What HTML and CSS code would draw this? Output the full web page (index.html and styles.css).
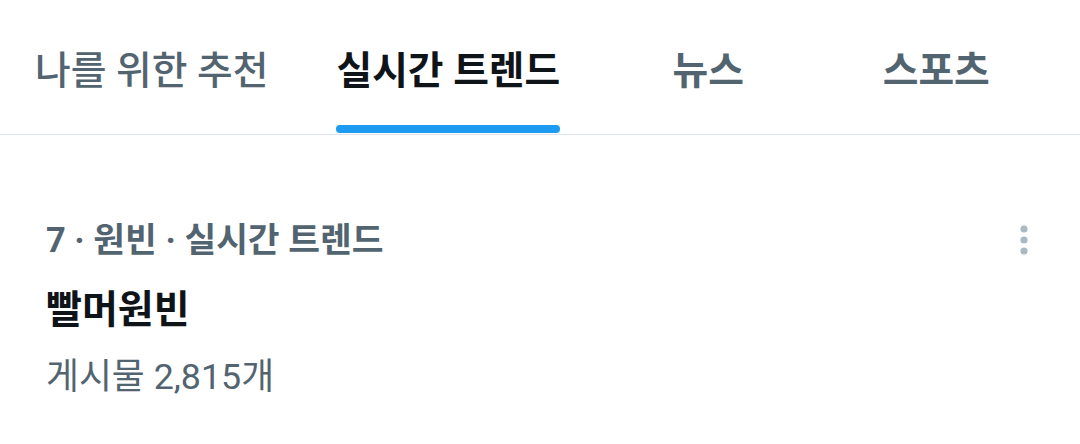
FILE: index.html
```html
<!DOCTYPE html>
<html lang="ko">
<head>
<meta charset="utf-8">
<link rel="stylesheet" href="styles.css">
</head>
<body>
<nav class="tabs">
  <div class="tab tab-first"><span class="tab-label">나를 위한 추천</span><span class="tab-bar"></span></div>
  <div class="tab tab-active"><span class="tab-label">실시간 트렌드</span><span class="tab-bar"></span></div>
  <div class="tab tab-wide"><span class="tab-label">뉴스</span><span class="tab-bar"></span></div>
  <div class="tab tab-wide"><span class="tab-label">스포츠</span><span class="tab-bar"></span></div>
</nav>
<section class="trend">
  <div class="trend-text">
    <div class="trend-meta">7 · 원빈 · 실시간 트렌드</div>
    <div class="trend-title">빨머원빈</div>
    <div class="trend-count">게시물 2,815개</div>
  </div>
  <div class="more">
    <svg width="12" height="34" viewBox="0 0 12 34"><circle cx="6" cy="6" r="3.6" fill="#aab8c2"/><circle cx="6" cy="17" r="3.6" fill="#aab8c2"/><circle cx="6" cy="28" r="3.6" fill="#aab8c2"/></svg>
  </div>
</section>
</body>
</html>
```
FILE: styles.css
```css
html, body {
  margin: 0;
  padding: 0;
  background: #ffffff;
}
body {
  font-family: "Roboto", "Noto Sans CJK KR", "Noto Sans", sans-serif;
  width: 1080px;
  height: 444px;
  overflow: hidden;
}
.tabs {
  display: flex;
  height: 134px;
  border-bottom: 1px solid #dde3e6;
}
.tab {
  display: flex;
  flex-direction: column;
  align-items: stretch;
  padding: 0 34px;
}
.tab-first {
  padding-left: 35px;
}
.tab-wide {
  width: 228px;
  box-sizing: border-box;
  padding: 0;
}
.tab-label {
  flex: 1;
  display: flex;
  align-items: center;
  justify-content: center;
  padding-top: 8px;
  font-size: 38.8px;
  font-weight: 500;
  color: #536471;
  white-space: nowrap;
}
.tab-wide .tab-label,
.tab-active .tab-label {
  font-weight: 700;
}
.tab-active .tab-label {
  color: #0f1419;
}
.tab-bar {
  height: 8px;
  margin-bottom: 1px;
  border-radius: 4px;
}
.tab-active .tab-bar {
  background: #1d9bf0;
}
.trend {
  display: flex;
  justify-content: space-between;
  align-items: flex-start;
  padding: 80px 50px 0 46px;
}
.trend-text {
  display: flex;
  flex-direction: column;
}
.trend-meta {
  font-size: 34.5px;
  font-weight: 700;
  color: #536471;
  line-height: 50px;
}
.trend-title {
  font-size: 39px;
  font-weight: 700;
  color: #0f1419;
  line-height: 50px;
  margin-top: 20px;
}
.trend-count {
  font-size: 35.8px;
  font-weight: 400;
  color: #536471;
  line-height: 50px;
  margin-top: 17px;
}
.more {
  padding-top: 8px;
  display: flex;
}
```
